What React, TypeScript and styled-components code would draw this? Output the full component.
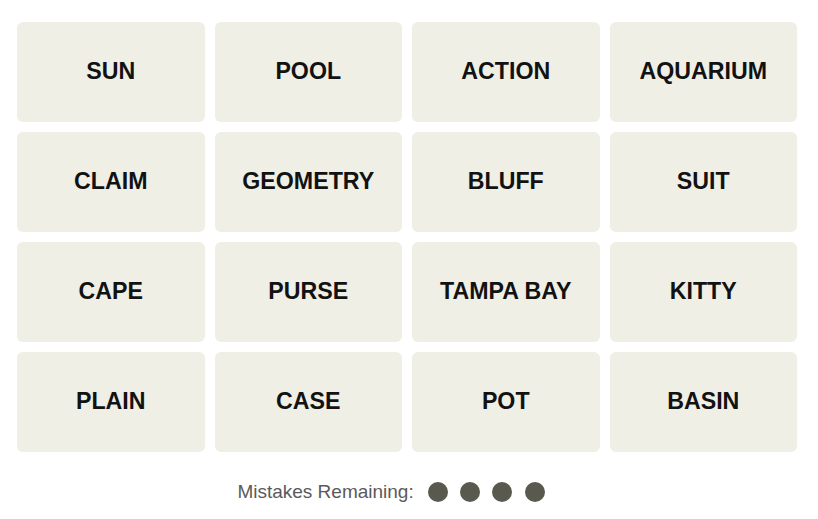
import React from "react";
import styled, { createGlobalStyle } from "styled-components";

const Global = createGlobalStyle`
  html, body { margin: 0; padding: 0; background: #ffffff; }
  body { font-family: "Liberation Sans", Arial, sans-serif; }
`;

const Page = styled.main`
  padding: 22px 0 0 17px;
`;

const Board = styled.div`
  width: 780px;
  display: grid;
  grid-template-columns: repeat(4, 1fr);
  grid-auto-rows: 100px;
  gap: 10px;
`;

const Tile = styled.button`
  border: none;
  margin: 0;
  padding: 0 0 2px 0;
  border-radius: 6px;
  background: #efefe6;
  color: #121212;
  font-family: "Liberation Sans", Arial, sans-serif;
  font-weight: 700;
  font-size: 23.2px;
  text-transform: uppercase;
  display: flex;
  align-items: center;
  justify-content: center;
  cursor: pointer;
`;

const Status = styled.div`
  width: 780px;
  margin-top: 30px;
  display: flex;
  align-items: center;
  justify-content: center;
  height: 20px;
`;

const Label = styled.span`
  font-family: "Liberation Sans", Arial, sans-serif;
  font-size: 19px;
  color: #5a5a5a;
  margin-right: 14px;
`;

const Dots = styled.div`
  display: flex;
  gap: 12.3px;
  margin-right: 32px;
`;

const Dot = styled.span`
  width: 20px;
  height: 20px;
  border-radius: 50%;
  background: #5a594e;
`;

const words = [
  "SUN", "POOL", "ACTION", "AQUARIUM",
  "CLAIM", "GEOMETRY", "BLUFF", "SUIT",
  "CAPE", "PURSE", "TAMPA BAY", "KITTY",
  "PLAIN", "CASE", "POT", "BASIN",
];

export default function App() {
  return (
    <>
      <Global />
      <Page>
        <Board>
          {words.map((w) => (
            <Tile key={w}>{w}</Tile>
          ))}
        </Board>
        <Status>
          <Label>Mistakes Remaining:</Label>
          <Dots>
            {[0, 1, 2, 3].map((i) => (
              <Dot key={i} />
            ))}
          </Dots>
        </Status>
      </Page>
    </>
  );
}
